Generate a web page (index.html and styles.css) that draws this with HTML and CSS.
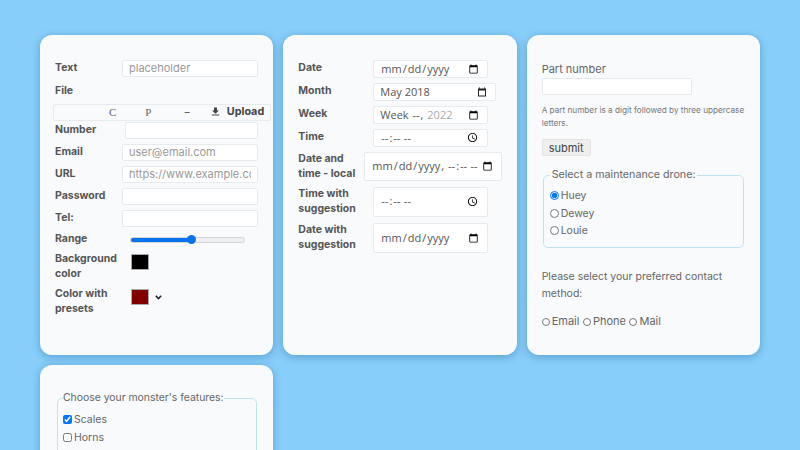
FILE: index.html
```html
<!DOCTYPE html>
<html lang="en">
<head>
<meta charset="utf-8">
<title>Form controls</title>
<link rel="stylesheet" href="styles.css">
</head>
<body>
<main class="grid">
  <section class="card card-a">
    <div class="row row-text"><label class="lbl">Text</label><input class="field" type="text" placeholder="placeholder"></div>
    <div class="row row-file"><label class="lbl">File</label></div>
    <div class="upload">
      <span class="up-c">C</span><span class="up-p">P</span><span class="up-m">−</span>
      <svg class="up-i" width="9" height="9" viewBox="0 0 9 9"><path d="M3 0.5h3v3h2l-3.5 3.2L1 3.5h2zM0.8 7.6h7.4v1H0.8z" fill="#444"/></svg>
      <span class="up-t">Upload</span>
    </div>
    <div class="row row-num"><label class="lbl">Number</label><input class="field field-num" type="number"></div>
    <div class="row"><label class="lbl">Email</label><input class="field" type="email" placeholder="user@email.com"></div>
    <div class="row"><label class="lbl">URL</label><input class="field" type="url" placeholder="https://www.example.com"></div>
    <div class="row"><label class="lbl">Password</label><input class="field" type="password"></div>
    <div class="row"><label class="lbl">Tel:</label><input class="field" type="tel"></div>
    <div class="row row-range"><label class="lbl">Range</label><input class="range" type="range" min="0" max="100" value="54"></div>
    <div class="row row-color"><label class="lbl">Background color</label><input class="color" type="color" value="#000000"></div>
    <div class="row row-color"><label class="lbl">Color with presets</label><input class="color" type="color" value="#800000">
      <svg class="chev" width="7" height="5" viewBox="0 0 7 5"><path d="M0.8 0.8L3.5 3.6L6.2 0.8" fill="none" stroke="#222" stroke-width="1.5"/></svg>
    </div>
  </section>

  <section class="card card-b">
    <div class="row d-row"><label class="lbl d-lbl">Date</label><input class="dt" type="date"></div>
    <div class="row d-row"><label class="lbl d-lbl">Month</label>
      <div class="dt dt-month"><span>May 2018</span>
        <svg class="cal" width="10" height="10" viewBox="0 0 10 10"><path d="M2.5 0.5v1.2M7.5 0.5v1.2" stroke="#222" stroke-width="1.1" fill="none"/><path d="M1 1.6h8v7.9H1zM2 3.6v4.9h6V3.6z" fill="#222" fill-rule="evenodd"/></svg>
      </div>
    </div>
    <div class="row d-row"><label class="lbl d-lbl">Week</label><input class="dt dt-week" type="week" min="2022-W01" max="2022-W52"></div>
    <div class="row d-row"><label class="lbl d-lbl">Time</label><input class="dt" type="time"></div>
    <div class="row d-row d-tall"><label class="lbl d-lbl">Date and time - local</label><input class="dt dt-local" type="datetime-local"></div>
    <div class="row d-row d-tall"><label class="lbl d-lbl">Time with suggestion</label><input class="dt dt-big" type="time"></div>
    <div class="row d-row d-tall"><label class="lbl d-lbl">Date with suggestion</label><input class="dt dt-big" type="date"></div>
  </section>

  <section class="card card-c">
    <label class="part-lbl">Part number</label>
    <input class="field part" type="text">
    <p class="hint">A part number is a digit followed by three uppercase letters.</p>
    <button class="submit" type="button">submit</button>
    <fieldset class="fs fs-drone">
      <legend>Select a maintenance drone:</legend>
      <div class="opt"><input type="radio" name="drone" checked><label>Huey</label></div>
      <div class="opt"><input type="radio" name="drone"><label>Dewey</label></div>
      <div class="opt"><input type="radio" name="drone"><label>Louie</label></div>
    </fieldset>
    <p class="contact">Please select your preferred contact method:</p>
    <div class="inline-opts">
      <input type="radio" name="c"><label>Email</label>
      <input type="radio" name="c"><label>Phone</label>
      <input type="radio" name="c"><label>Mail</label>
    </div>
  </section>

  <section class="card card-d">
    <fieldset class="fs fs-monster">
      <legend>Choose your monster's features:</legend>
      <div class="opt"><input type="checkbox" checked><label>Scales</label></div>
      <div class="opt"><input type="checkbox"><label>Horns</label></div>
    </fieldset>
  </section>
</main>
</body>
</html>
```
FILE: styles.css
```css
* { box-sizing: border-box; }
html, body { margin: 0; height: 450px; overflow: hidden; }
body {
  background: #87cefa;
  font-family: "Inter", "Open Sans", sans-serif;
  color: #666;
  font-size: 11px;
}
.grid {
  display: grid;
  grid-template-columns: repeat(3, minmax(0, 1fr));
  grid-auto-rows: 320px;
  gap: 10px;
  padding: 35px 40px 0;
}
.card {
  background: #f8fafc;
  border-radius: 12px;
  box-shadow: 0 2px 8px rgba(30, 90, 140, .4);
}
.card-a { padding: 25px 15px 0; }
.card-b { padding: 25px 15px 0; }
.card-c { padding: 27px 15px 0; }
.card-d { padding: 26px 16px 0; }

.row { display: flex; align-items: center; margin-bottom: 5px; }
.lbl {
  width: 67px;
  flex: none;
  font-weight: 700;
  font-size: 10.5px;
  line-height: 14.5px;
  color: #555;
}
.field {
  flex: 1;
  min-width: 0;
  height: 17px;
  border: 1px solid #e6ebf0;
  border-radius: 2px;
  background: #fff;
  padding: 0 6px 1px;
  font: 400 11px "Inter", sans-serif;
  color: #666;
  outline: none;
}
.field::placeholder { color: #999; }
.row-text { margin-bottom: 7px; }
.row-file { margin-bottom: 5px; height: 15px; }
.field-num { margin-left: 2.5px; }

.upload {
  display: flex;
  align-items: center;
  margin: 0 -17px 1px -2px;
  width: 218px;
  height: 17px;
  border: 1px solid #e6ebf0;
  border-radius: 2px;
  padding-bottom: 2px;
  font: 400 11px "Liberation Serif", serif;
  color: #666;
}
.up-c { margin-left: 55px; }
.up-p { margin-left: 29px; }
.up-m { margin-left: 32px; font-family: "Inter", sans-serif; }
.up-i { margin-left: 20px; }
.up-t { margin-left: 7px; font: 700 10.8px "Inter", sans-serif; color: #444; }

.row-range { height: 15px; margin-top: 5px; }
.range {
  -webkit-appearance: none;
  appearance: none;
  width: 115px;
  height: 6px;
  margin: 0 0 0 8px;
  border: 1px solid #d4d4d4;
  border-radius: 3px;
  background: linear-gradient(to right, #0a74f0 54%, #efefef 54%);
}
.range::-webkit-slider-thumb {
  -webkit-appearance: none;
  width: 9px;
  height: 9px;
  border-radius: 50%;
  background: #0a74f0;
}
.row-color { align-items: flex-start; margin-bottom: 6px; }
.row-color .lbl { height: 29px; }
.color {
  width: 18px;
  height: 16px;
  margin: 2px 0 0 9px;
  padding: 0;
  border: 0;
  background: transparent;
}
.color::-webkit-color-swatch-wrapper { padding: 0; }
.color::-webkit-color-swatch { border: 1px solid #aaa; border-radius: 0; }
.chev { margin: 8px 0 0 6px; }

.d-row { align-items: flex-start; }
.d-lbl { width: 66px; margin-right: 9px; padding-top: 1px; }
.d-tall .d-lbl { padding-top: 0; }
.dt {
  width: 115px;
  height: 18px;
  border: 1px solid #e6ebf0;
  border-radius: 2px;
  background: #fff;
  padding: 0 6px 2px;
  font: 400 11px "Open Sans", sans-serif;
  color: #555;
}
.dt-week::-webkit-datetime-edit-year-field { color: #aaa; }
.dt::-webkit-calendar-picker-indicator { margin-top: 2px; }
.dt-month {
  width: 123px;
  display: flex;
  align-items: center;
  justify-content: space-between;
  padding-right: 8px;
}
.cal { margin-top: 2px; }
.dt-local { width: 138px; height: 29px; margin-left: -9px; }
.dt-big { height: 30px; }
.d-tall { margin-bottom: 6px; }

.part-lbl { display: block; font-size: 11px; line-height: 14px; }
.part { display: block; width: 150px; height: 17px; margin-top: 2px; }
.hint { margin: 9px 0; font-size: 8.2px; line-height: 13px; color: #777; }
.submit {
  display: block;
  width: 49px;
  height: 17px;
  padding: 0;
  font: 400 11px "Inter", sans-serif;
  color: #444;
  background: #efefef;
  border: 1px solid #e3e3e3;
  border-radius: 2px;
}
.fs {
  margin: 0;
  border: 1px solid #bfe3ee;
  border-radius: 5px;
  font-size: 10.5px;
}
.fs legend { padding: 0; line-height: 14px; }
.fs-drone { width: 201px; height: 80px; margin: 12px 0 0 1px; padding: 5px 6px 0; }
.fs-drone legend { padding: 0 2px; font-size: 10.7px; }
.fs-monster { width: 200px; height: 120px; margin: 0 0 0 1px; padding: 6px 5px 0; }
.fs-monster legend { font-size: 10.4px; }
.opt { display: flex; align-items: center; height: 17.5px; }
.opt input { margin: 0 2px 0 0; width: 9px; height: 9px; }
.contact { margin: 20px 0 11px; font-size: 10.5px; line-height: 17px; }
.inline-opts { display: flex; align-items: center; font-size: 11px; line-height: 17px; }
.inline-opts input { margin: 0 2px 0 0; width: 8px; height: 8px; }
.inline-opts label { margin-right: 3.5px; }
```
